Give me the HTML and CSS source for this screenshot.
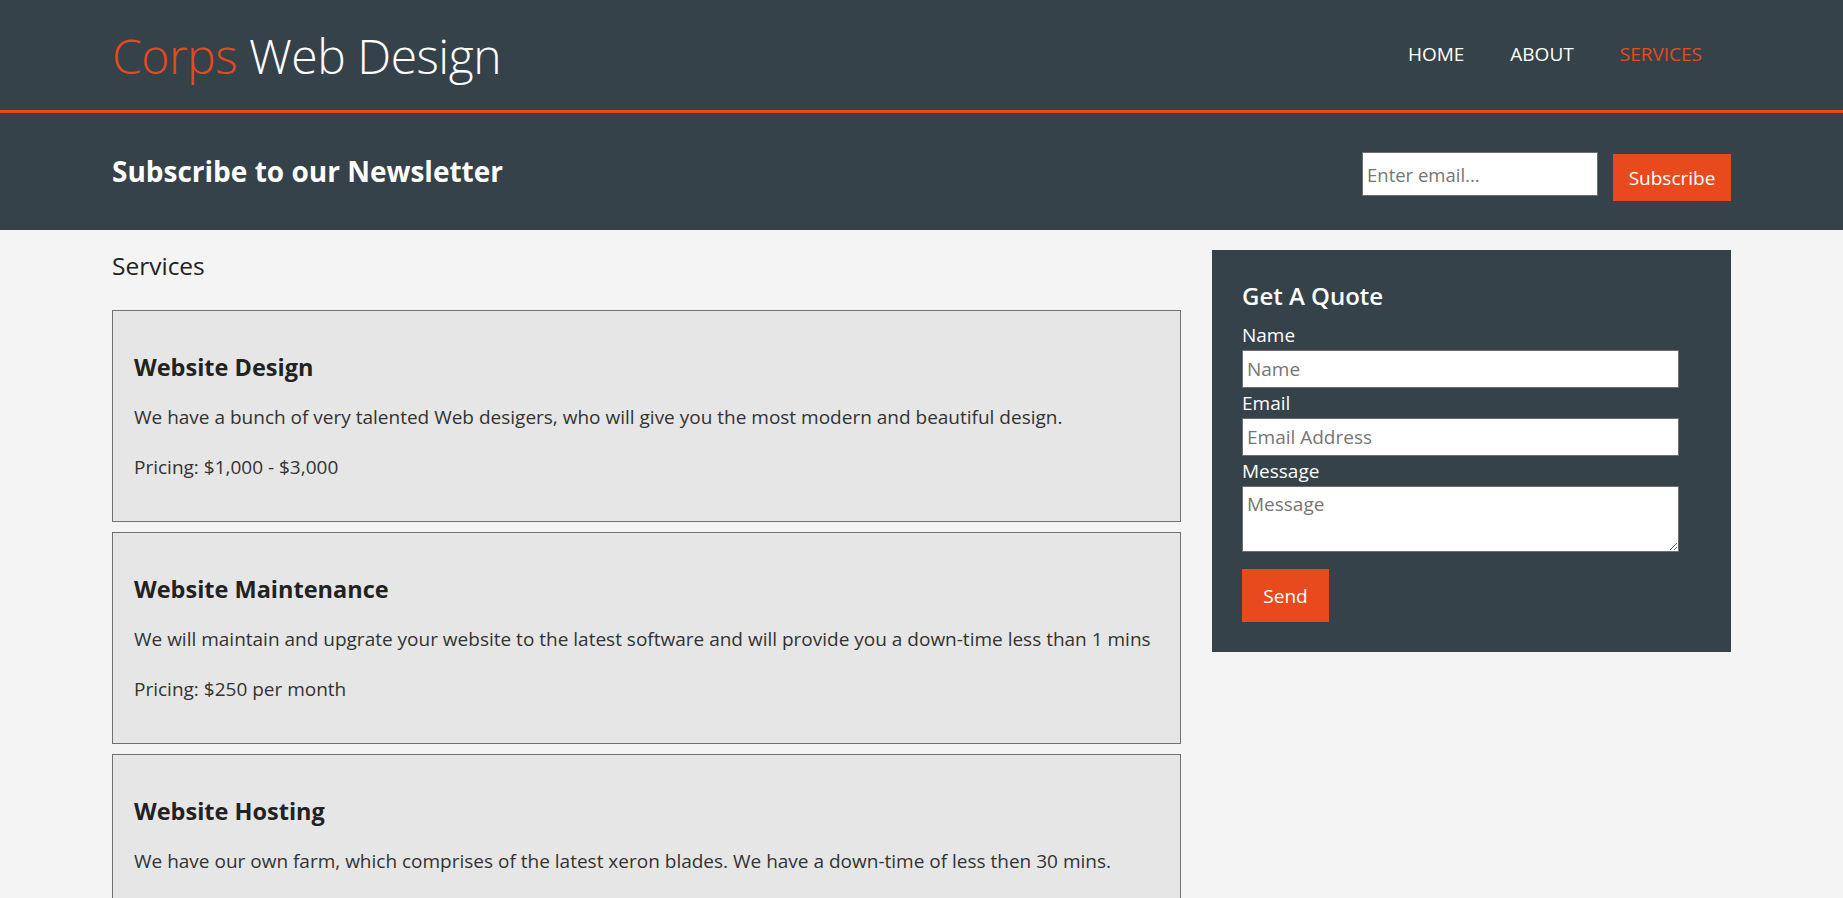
FILE: index.html
```html
<!DOCTYPE html>
<html lang="en">
<head>
<meta charset="utf-8">
<title>Corps Web Design | Services</title>
<link rel="stylesheet" href="styles.css">
</head>
<body>
<header class="site-header">
  <div class="container header-inner">
    <div class="branding"><span class="highlight">Corps</span> Web Design</div>
    <nav class="main-nav">
      <a href="#" class="nav-link">HOME</a>
      <a href="#" class="nav-link">ABOUT</a>
      <a href="#" class="nav-link current">SERVICES</a>
    </nav>
  </div>
</header>
<section class="newsletter">
  <div class="container newsletter-inner">
    <h2 class="newsletter-title">Subscribe to our Newsletter</h2>
    <form class="newsletter-form">
      <input class="newsletter-input" type="email" placeholder="Enter email...">
      <button class="btn-orange newsletter-btn" type="button">Subscribe</button>
    </form>
  </div>
</section>
<div class="container main-area">
  <main class="services">
    <h1 class="page-title">Services</h1>
    <ul class="service-list">
      <li class="service">
        <h3 class="service-title">Website Design</h3>
        <p class="service-text">We have a bunch of very talented Web desigers, who will give you the most modern and beautiful design.</p>
        <p class="service-text">Pricing: $1,000 - $3,000</p>
      </li>
      <li class="service">
        <h3 class="service-title">Website Maintenance</h3>
        <p class="service-text">We will maintain and upgrate your website to the latest software and will provide you a down-time less than 1 mins</p>
        <p class="service-text">Pricing: $250 per month</p>
      </li>
      <li class="service">
        <h3 class="service-title">Website Hosting</h3>
        <p class="service-text">We have our own farm, which comprises of the latest xeron blades. We have a down-time of less then 30 mins.</p>
        <p class="service-text">Pricing: $500 per month</p>
      </li>
    </ul>
  </main>
  <aside class="sidebar">
    <div class="quote">
      <h3 class="quote-title">Get A Quote</h3>
      <form class="quote-form">
        <label class="quote-label">Name</label>
        <input class="quote-input" type="text" placeholder="Name">
        <label class="quote-label">Email</label>
        <input class="quote-input" type="email" placeholder="Email Address">
        <label class="quote-label">Message</label>
        <textarea class="quote-input quote-textarea" placeholder="Message"></textarea>
        <button class="btn-orange send-btn" type="button">Send</button>
      </form>
    </div>
  </aside>
</div>
</body>
</html>
```
FILE: styles.css
```css
* { box-sizing: border-box; }
html, body { margin: 0; padding: 0; }
body {
  background: #f4f4f4;
  color: #222;
  font-family: "Open Sans", "Noto Sans", Arial, sans-serif;
  font-size: 19px;
  line-height: 1.5;
}
.container {
  width: 1619px;
  margin: 0 auto;
}
.site-header {
  background: #35424a;
  border-bottom: 3px solid #e8491d;
  color: #fff;
}
.header-inner {
  height: 110px;
  display: flex;
  align-items: center;
  justify-content: space-between;
}
.branding {
  font-size: 48px;
  font-weight: 300;
  line-height: 1;
  letter-spacing: -0.5px;
  margin-top: 2px;
  color: #fff;
}
.highlight { color: #e8491d; }
.main-nav {
  display: flex;
  gap: 46px;
  margin-right: 29px;
  margin-top: -2px;
}
.nav-link {
  color: #fff;
  text-decoration: none;
  font-size: 19px;
}
.nav-link.current { color: #e8491d; }
.newsletter {
  background: #35424a;
  color: #fff;
}
.newsletter-inner {
  height: 117px;
  display: flex;
  align-items: center;
  justify-content: space-between;
}
.newsletter-title {
  margin: 0;
  font-size: 28px;
  font-weight: 700;
  line-height: 1.2;
}
.newsletter-form {
  display: flex;
  align-items: flex-start;
  gap: 15px;
  margin-top: 10px;
}
.newsletter-input {
  width: 236px;
  height: 44px;
  border: 1px solid #6e6e6e;
  padding: 0 4px;
  font-family: inherit;
  font-size: 18.5px;
}
.newsletter-input::placeholder { color: #757575; }
.btn-orange {
  background: #e8491d;
  color: #fff;
  border: 0;
  font-family: inherit;
  font-size: 19px;
  cursor: pointer;
}
.newsletter-btn {
  width: 118px;
  height: 47px;
  margin-top: 2px;
}
.main-area {
  display: flex;
  align-items: flex-start;
  gap: 31px;
  padding-top: 20px;
}
.services {
  width: 1069px;
  flex: none;
}
.page-title {
  margin: 0 0 28px;
  font-size: 24.5px;
  font-weight: 400;
  line-height: 32px;
}
.service-list {
  list-style: none;
  margin: 0;
  padding: 0;
}
.service {
  background: #e6e6e6;
  border: 1px solid #707070;
  padding: 20px 21px 18px;
  margin-bottom: 10px;
}
.service-title {
  margin: 22px 0 0;
  font-size: 23.5px;
  font-weight: 700;
  line-height: 28px;
}
.service-text {
  margin: 22px 0;
  line-height: 28px;
  color: #333;
}
.sidebar {
  width: 519px;
  flex: none;
}
.quote {
  background: #35424a;
  color: #fff;
  padding: 30px;
}
.quote-title {
  margin: 0 0 8px;
  font-size: 24px;
  font-weight: 600;
  line-height: 32px;
}
.quote-form {
  display: flex;
  flex-direction: column;
  align-items: flex-start;
}
.quote-label {
  display: block;
  line-height: 30px;
  font-size: 19px;
}
.quote-input {
  width: 437px;
  height: 38px;
  border: 1px solid #6e6e6e;
  padding: 0 4px;
  font-family: inherit;
  font-size: 19px;
  color: #333;
}
.quote-input::placeholder { color: #757575; }
.quote-textarea {
  height: 66px;
  padding: 4px;
  line-height: 1.4;
  resize: vertical;
}
.send-btn {
  margin-top: 17px;
  width: 87px;
  height: 53px;
}
```
